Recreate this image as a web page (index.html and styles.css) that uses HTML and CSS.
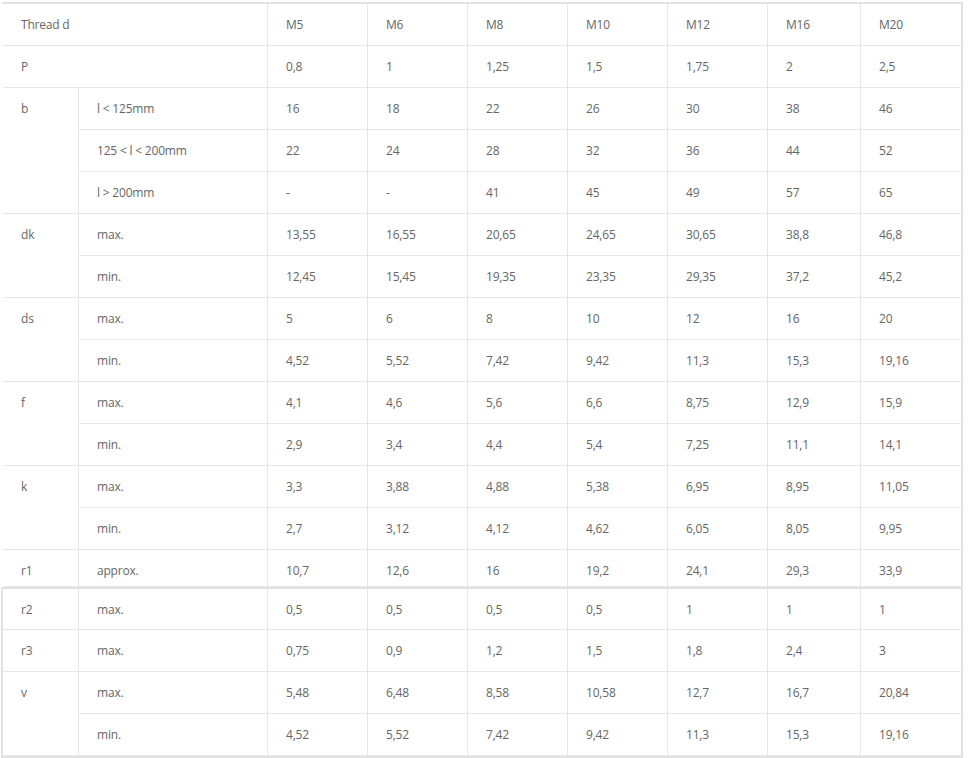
FILE: index.html
```html
<!DOCTYPE html>
<html lang="en">
<head>
<meta charset="utf-8">
<title>Thread dimensions</title>
<link rel="stylesheet" href="styles.css">
</head>
<body>
<div class="wrap">
<table class="spec spec-top">
  <colgroup>
    <col class="c1"><col class="c2"><col class="cm"><col class="cm"><col class="cm"><col class="cm"><col class="cm"><col class="c16"><col class="c20">
  </colgroup>
  <tr><td colspan="2" class="first">Thread d</td><td>M5</td><td>M6</td><td>M8</td><td>M10</td><td>M12</td><td>M16</td><td>M20</td></tr>
  <tr><td colspan="2" class="first">P</td><td>0,8</td><td>1</td><td>1,25</td><td>1,5</td><td>1,75</td><td>2</td><td>2,5</td></tr>
  <tr><td rowspan="3" class="first">b</td><td>l &lt; 125mm</td><td>16</td><td>18</td><td>22</td><td>26</td><td>30</td><td>38</td><td>46</td></tr>
  <tr><td>125 &lt; l &lt; 200mm</td><td>22</td><td>24</td><td>28</td><td>32</td><td>36</td><td>44</td><td>52</td></tr>
  <tr><td>l &gt; 200mm</td><td>-</td><td>-</td><td>41</td><td>45</td><td>49</td><td>57</td><td>65</td></tr>
  <tr><td rowspan="2" class="first">dk</td><td>max.</td><td>13,55</td><td>16,55</td><td>20,65</td><td>24,65</td><td>30,65</td><td>38,8</td><td>46,8</td></tr>
  <tr><td>min.</td><td>12,45</td><td>15,45</td><td>19,35</td><td>23,35</td><td>29,35</td><td>37,2</td><td>45,2</td></tr>
  <tr><td rowspan="2" class="first">ds</td><td>max.</td><td>5</td><td>6</td><td>8</td><td>10</td><td>12</td><td>16</td><td>20</td></tr>
  <tr><td>min.</td><td>4,52</td><td>5,52</td><td>7,42</td><td>9,42</td><td>11,3</td><td>15,3</td><td>19,16</td></tr>
  <tr><td rowspan="2" class="first">f</td><td>max.</td><td>4,1</td><td>4,6</td><td>5,6</td><td>6,6</td><td>8,75</td><td>12,9</td><td>15,9</td></tr>
  <tr><td>min.</td><td>2,9</td><td>3,4</td><td>4,4</td><td>5,4</td><td>7,25</td><td>11,1</td><td>14,1</td></tr>
  <tr><td rowspan="2" class="first">k</td><td>max.</td><td>3,3</td><td>3,88</td><td>4,88</td><td>5,38</td><td>6,95</td><td>8,95</td><td>11,05</td></tr>
  <tr><td>min.</td><td>2,7</td><td>3,12</td><td>4,12</td><td>4,62</td><td>6,05</td><td>8,05</td><td>9,95</td></tr>
  <tr class="short"><td class="first">r1</td><td>approx.</td><td>10,7</td><td>12,6</td><td>16</td><td>19,2</td><td>24,1</td><td>29,3</td><td>33,9</td></tr>
</table>
<table class="spec spec-bottom">
  <colgroup>
    <col class="c1"><col class="c2"><col class="cm"><col class="cm"><col class="cm"><col class="cm"><col class="cm"><col class="c16"><col class="c20">
  </colgroup>
  <tr class="tight"><td class="first">r2</td><td>max.</td><td>0,5</td><td>0,5</td><td>0,5</td><td>0,5</td><td>1</td><td>1</td><td>1</td></tr>
  <tr><td class="first">r3</td><td>max.</td><td>0,75</td><td>0,9</td><td>1,2</td><td>1,5</td><td>1,8</td><td>2,4</td><td>3</td></tr>
  <tr><td rowspan="2" class="first">v</td><td>max.</td><td>5,48</td><td>6,48</td><td>8,58</td><td>10,58</td><td>12,7</td><td>16,7</td><td>20,84</td></tr>
  <tr><td>min.</td><td>4,52</td><td>5,52</td><td>7,42</td><td>9,42</td><td>11,3</td><td>15,3</td><td>19,16</td></tr>
</table>
</div>
</body>
</html>
```
FILE: styles.css
```css
html, body {
  margin: 0;
  padding: 0;
  background: #ffffff;
}

.wrap {
  padding: 2px 0 0 1px;
  width: 962px;
}

.spec {
  width: 962px;
  table-layout: fixed;
  border-collapse: separate;
  border-spacing: 0;
  font-family: "Open Sans", "Noto Sans", sans-serif;
  font-size: 12px;
  letter-spacing: -0.2px;
  color: #666666;
}

.spec-top {
  border-top: 2px solid #e2e2e2;
  border-right: 2px solid #e2e2e2;
  border-left: 2px solid #ffffff;
}

.spec-bottom {
  border: 2px solid #e2e2e2;
}

.c1 { width: 75px; }
.c2 { width: 189px; }
.cm { width: 100px; }
.c16 { width: 93px; }
.c20 { width: 101px; }

.spec td {
  padding: 11px 0 11px 18px;
  line-height: 19px;
  vertical-align: top;
  text-align: left;
  border-bottom: 1px solid #e6e6e6;
  border-left: 1px solid #e6e6e6;
  white-space: nowrap;
}

.spec td.first {
  border-left: none;
  padding-left: 18px;
}

.spec .short td {
  padding-bottom: 6px;
}

.spec .tight td {
  padding-bottom: 10px;
}
```
